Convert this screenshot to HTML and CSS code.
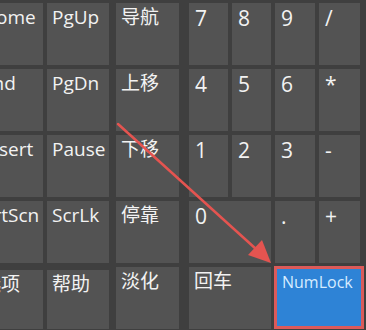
FILE: index.html
```html
<!DOCTYPE html>
<html lang="zh-CN">
  <head>
    <meta charset="UTF-8" />
    <meta name="viewport" content="width=device-width, initial-scale=1.0" />
    <title>屏幕键盘</title>
    <link rel="stylesheet" href="styles.css">
  </head>
  <body>
    <div class="board">
      <div class="nav-keys">
        <div class="key">Home</div>
        <div class="key">PgUp</div>
        <div class="key wide-gap">导航</div>
        <div class="key">End</div>
        <div class="key">PgDn</div>
        <div class="key wide-gap">上移</div>
        <div class="key">Insert</div>
        <div class="key">Pause</div>
        <div class="key wide-gap">下移</div>
        <div class="key">PrtScn</div>
        <div class="key">ScrLk</div>
        <div class="key wide-gap">停靠</div>
        <div class="key low">选项</div>
        <div class="key low">帮助</div>
        <div class="key wide-gap">淡化</div>
      </div>

      <div class="num-keys">
        <div class="key digit">7</div>
        <div class="key digit">8</div>
        <div class="key digit">9</div>
        <div class="key digit">/</div>
        <div class="key digit">4</div>
        <div class="key digit">5</div>
        <div class="key digit">6</div>
        <div class="key digit">*</div>
        <div class="key digit">1</div>
        <div class="key digit">2</div>
        <div class="key digit">3</div>
        <div class="key digit">-</div>
        <div class="key digit span2">0</div>
        <div class="key digit">.</div>
        <div class="key digit">+</div>
        <div class="key span2">回车</div>
        <div class="key span2 numlock">NumLock</div>
      </div>
    </div>

    <!-- annotation arrow -->
    <svg class="arrow" width="366" height="330" viewBox="0 0 366 330">
      <line x1="118" y1="124" x2="256" y2="249" stroke="#e45450" stroke-width="2.5" stroke-linecap="round" />
      <polygon points="271,263 248,255 262,240" fill="#e45450" />
    </svg>
  </body>
</html>
```

FILE: styles.css
```css
body {
  margin: 0;
  overflow: hidden;
  background: #3f3f3f;
  color: #f2f2f2;
  font-family: "Open Sans", "Noto Sans CJK SC", sans-serif;
  width: 366px;
  height: 330px;
}
.board {
  display: flex;
  margin-left: -23px;
  padding-top: 3px;
}
.nav-keys {
  display: grid;
  grid-template-columns: 66px 62px 66px;
  grid-auto-rows: 62px;
  column-gap: 4px;
  row-gap: 4px;
}
.num-keys {
  display: grid;
  grid-template-columns: 39px 39px 40px 41px;
  grid-auto-rows: 62px;
  column-gap: 4px;
  row-gap: 4px;
  margin-left: 10px;
}
.key {
  background: #535353;
  font-size: 19px;
  line-height: 24px;
  padding: 2px 5px;
  white-space: nowrap;
  overflow: hidden;
}
.wide-gap {
  margin-left: 3px;
}
.low {
  margin-top: 3px;
}
.digit {
  font-size: 21px;
  line-height: 26px;
  padding: 2px 6px;
}
.span2 {
  grid-column: span 2;
}
.numlock {
  background: #2e83d6;
  color: #d6ecff;
  font-size: 16px;
  line-height: 22px;
  padding: 2px 5px;
  border: 3px solid #dc5a5a;
  margin: -1px -4px 0 -1px;
}
.arrow {
  position: absolute;
  top: 0;
  left: 0;
  pointer-events: none;
}
```
